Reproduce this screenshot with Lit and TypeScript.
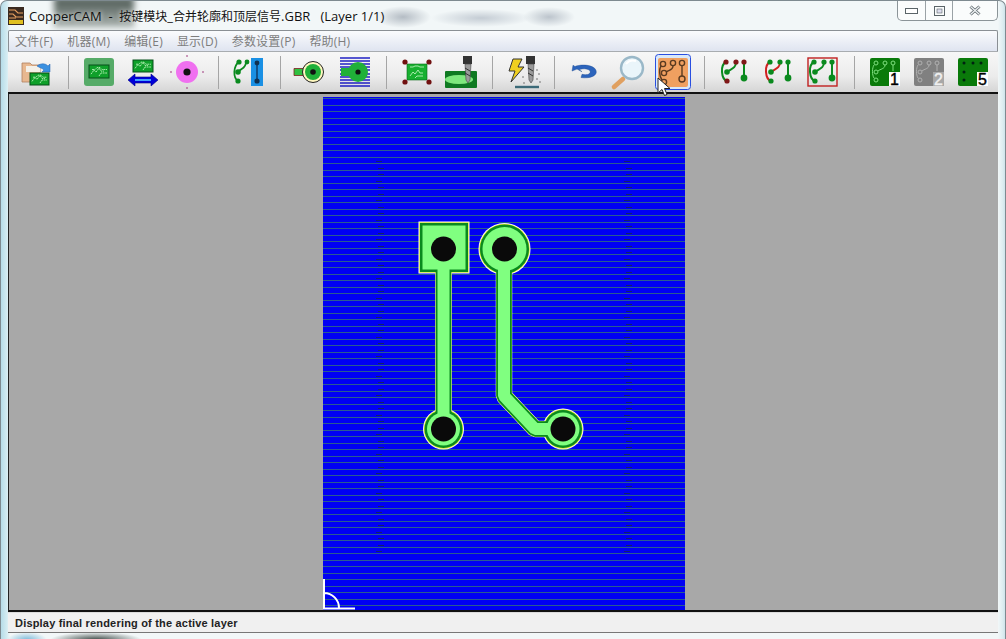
import {LitElement, html, css, svg} from 'lit';
import {customElement} from 'lit/decorators.js';

const G = '#0a8a1e';

// little pcb board used by a few of the toolbar icons
const pcb = (x: number, y: number, w: number, h: number) => svg`
  <rect x=${x} y=${y} width=${w} height=${h} fill="#0fa02a" stroke="#07501a" stroke-width="1"/>
  <path d="M${x + 2} ${y + h * 0.7}l3-4 2 2 3-4 2 3h3M${x + 3} ${y + h * 0.35}h3l2-2h3l2 2h${w - 15}M${x + 10} ${y + h - 2}l2-3h${w - 14}"
    fill="none" stroke="#b8f0b8" stroke-width=".9" stroke-dasharray="2 .6"/>`;

// three-track board motif, colours of the dots and tracks vary per button
const traces = (dot: string, left: string, mid: string) => svg`
  <g fill="none" stroke-width="2">
    <path d="M11 10C5 13 6 27 12 29" stroke=${left}/>
    <path d="M21 10C21 17 15 17 12 20" stroke=${mid}/>
    <path d="M29 10V26" stroke=${G}/>
  </g>
  <circle cx="11" cy="10" r="2.6" fill=${dot}/>
  <circle cx="21" cy="10" r="2.6" fill=${dot}/>
  <circle cx="29" cy="10" r="2.6" fill=${dot}/>
  <circle cx="12" cy="20" r="2.8" fill=${G}/>
  <circle cx="12" cy="29" r="2.6" fill=${dot}/>
  <circle cx="29" cy="26" r="3.4" fill=${G}/>`;

const layer = (bg: string, ring: string, num: string, numBg: string, numFg: string, solid = false) => svg`
  <rect x="5" y="6" width="30" height="28" rx="2" fill=${bg}/>
  ${solid
    ? svg`<g fill="#021"><circle cx="11" cy="11" r="1.5"/><circle cx="20" cy="11" r="1.5"/><circle cx="28" cy="11" r="1.5"/><circle cx="11" cy="20" r="1.5"/><circle cx="11" cy="28" r="1.5"/></g>`
    : svg`<g fill="none" stroke=${ring} stroke-width="1"><circle cx="11" cy="11" r="2"/><circle cx="20" cy="11" r="2"/><circle cx="28" cy="11" r="2"/><circle cx="11" cy="20" r="2"/><circle cx="11" cy="28" r="2"/><path d="M20 13c0 4-5 4-7 6M28 13v6M9 13c-2 3-2 10 0 13"/></g>`}
  <rect x="24" y="20" width="11" height="14" fill=${numBg}/>
  <text x="29.5" y="32.5" text-anchor="middle" font-family="'Liberation Sans',sans-serif" font-size="16" stroke=${numFg} stroke-width=".4" fill=${numFg}>${num}</text>`;

const drill = (x: number) => svg`
  <rect x=${x} y="4" width="9" height="8" fill="#333"/>
  <path d="M${x + 2} 12h6l-1 16-2 3-2-3z" fill="#9a9a9a" stroke="#444" stroke-width=".6"/>
  <path d="M${x + 2} 16l5 3M${x + 2} 21l5 3" stroke="#333" stroke-width="1"/>`;

const blueLines = [6, 9, 12, 15, 18, 22, 25, 28, 31, 34];

// null is a separator
const TOOLS: (ReturnType<typeof svg> | null)[] = [
  svg`<path d="M5 11h8l2 2h8v17H5z" fill="#e8b890" stroke="#b08060" stroke-width=".8"/>
      <path d="M9 14h14v6H9z" fill="#f4f0e8"/>
      <path d="M20 14c4-3 8-3 11 0l2-2v8h-8l2-2c-2-2-4-2-7-4z" fill="#3a90e0" stroke="#2060b0" stroke-width=".5"/>
      ${pcb(13, 21, 19, 12)}`,
  null,
  svg`<rect x="5" y="6" width="30" height="28" rx="3" fill="#56ab68"/>
      ${pcb(10, 13, 20, 13)}`,
  svg`${pcb(10, 8, 20, 12)}
      <path d="M5 28l7-6v3h16v-3l7 6-7 6v-3H12v3z" fill="#0000d8" stroke="#000080" stroke-width=".6"/>
      <path d="M12 27h16v2H12z" fill="#40a0ff"/>`,
  svg`<circle cx="20" cy="20" r="11" fill="#f070f0"/><circle cx="20" cy="20" r="3.6" fill="#111"/>
      <path d="M20 3v2M20 35v2M3 20h2M35 20h2" stroke="#a03a80" stroke-width="1"/>`,
  null,
  svg`<rect x="22" y="6" width="12" height="28" fill="#1a90e4"/>
      <path d="M28 11v18" stroke="#104070" stroke-width="1.6"/>
      <circle cx="28" cy="11" r="2.4" fill="#103050"/><circle cx="28" cy="29" r="2.6" fill="#103050"/>
      <g fill="none" stroke=${G} stroke-width="1.8"><path d="M10 10C4 14 4 26 9 29M17 10c0 6-4 6-8 10"/></g>
      <g fill=${G}><circle cx="10" cy="10" r="2.6"/><circle cx="18" cy="10" r="2.4"/><circle cx="9" cy="20" r="2.8"/><circle cx="9" cy="29" r="2.6"/></g>`,
  null,
  svg`<path d="M3 16.500h14v7H3z" fill="#30c040" stroke="#802020" stroke-width=".8"/>
      <circle cx="22" cy="20" r="10.500" fill="#fff8c0" stroke="#222" stroke-width="1"/>
      <circle cx="22" cy="20" r="8" fill="#20b038"/><circle cx="22" cy="20" r="2.800" fill="#111"/>`,
  svg`<g stroke="#1010c0" stroke-width="1.4">${blueLines.map(y => svg`<path d="M5 ${y}h30"/>`)}</g>
      <path d="M6 16h12v8H6z" fill="#20b038"/>
      <circle cx="23" cy="20" r="10" fill="#20b038"/><circle cx="23" cy="20" r="2.6" fill="#111"/>`,
  null,
  svg`<path d="M10 12H30V28H10z" fill="#18b030" stroke="#0a6a18" stroke-width=".6"/>
      <path d="M13 24l3-4 2 2 3-4 2 3h3M13 15h3l2-1h3l2 1h4M18 26l2-2h6" fill="none" stroke="#b8f0b8" stroke-width=".9"/>
      <g fill="#701010"><circle cx="8" cy="10" r="2.6"/><circle cx="32" cy="10" r="2.6"/><circle cx="8" cy="30" r="2.6"/><circle cx="32" cy="30" r="2.6"/></g>`,
  svg`<rect x="4" y="19" width="32" height="17" rx="1" fill="#0f7a22"/>
      <ellipse cx="18" cy="27.500" rx="14" ry="4.500" fill="#7ee87e"/>
      ${drill(22)}`,
  null,
  svg`<path d="M10 7h9l-4 8h6L8 30l4-11H6z" fill="#f0d020" stroke="#333" stroke-width="1"/>
      ${drill(23)}
      <path d="M12 35h24" stroke="#3c6a78" stroke-width="2.4"/>
      <g fill="#666"><circle cx="20" cy="25" r=".8"/><circle cx="36" cy="22" r=".8"/><circle cx="34" cy="27" r=".8"/><circle cx="37" cy="30" r=".8"/><circle cx="21" cy="31" r=".8"/><circle cx="34" cy="18" r=".8"/></g>`,
  null,
  svg`<path transform="translate(0 8) scale(1 .65)" d="M12 14l-5 3 1-9 2 2c6-4 19-3 21 6 2 8-6 13-15 11l1-5c6 2 9-1 8-5-1-3-6-5-11-2l3 3z" fill="#2c64bc" stroke="#1a4a90" stroke-width=".5"/>`,
  svg`<path d="M14 27L5 35" stroke="#e0a060" stroke-width="4.6" stroke-linecap="round"/>
      <circle cx="23" cy="16" r="11" fill="#eaf5fa" stroke="#9ab8c8" stroke-width="2.4"/>
      <path d="M17 12c3-4 7-4 10-3" stroke="#fff" stroke-width="2" fill="none"/>`,
  svg`<rect x="2.500" y="2.500" width="35" height="35" rx="3" fill="#d8e8fb" stroke="#2a4fe0"/>
      <rect x="5" y="6" width="30" height="29" rx="2" fill="#f0a060"/>
      <g fill="none" stroke="#5a3a20" stroke-width="1.4">
        <circle cx="10" cy="12" r="2.6"/><circle cx="20" cy="11" r="2.6"/><circle cx="29" cy="11" r="2.6"/>
        <circle cx="11" cy="21" r="2.6"/><circle cx="11" cy="30" r="2.6"/><circle cx="29" cy="27" r="3"/>
        <path d="M20 14c0 4-4 4-7 6M29 14v10M8 14c-2 3-2 10 1 14"/>
      </g>`,
  null,
  traces('#801818', G, G),
  traces(G, '#d02020', '#d02020'),
  svg`<rect x="5" y="6" width="29" height="28" fill="none" stroke="#c02020" stroke-width="1.4"/>${traces(G, G, G)}`,
  null,
  layer('#0a7a0a', '#7fe07f', '1', '#fff', '#000'),
  layer('#808080', '#b0b0b0', '2', '#a8a8a8', '#f0f0f0'),
  layer('#0a7a0a', '', '5', '#fff', '#000', true),
];

const MENUS = ['文件(F)', '机器(M)', '编辑(E)', '显示(D)', '参数设置(P)', '帮助(H)'];

@customElement('app-root')
export class AppRoot extends LitElement {
  static styles = css`
    :host {
      display: block;
      width: 1006px;
      height: 639px;
      overflow: hidden;
      position: relative;
      font-family: 'Open Sans', 'Noto Sans CJK SC', sans-serif;
    }

    .window {
      height: 639px;
      box-sizing: border-box;
      display: flex;
      flex-direction: column;
      padding: 0 7px 6px 7px;
      border-radius: 7px 7px 0 0;
      background:
        radial-gradient(ellipse 46px 8px at 95px 639px, #384440 0%, rgba(56, 68, 64, 0) 100%),
        radial-gradient(ellipse 20px 8px at 26px 639px, #7ab8d8 0%, rgba(122, 184, 216, 0) 100%),
        radial-gradient(ellipse 28px 11px at 402px 16px, #b4bcc4 0%, rgba(180, 188, 196, 0) 100%),
        radial-gradient(ellipse 50px 9px at 480px 17px, #c4ccd4 0%, rgba(196, 204, 212, 0) 100%),
        radial-gradient(ellipse 26px 10px at 548px 16px, #bcc4cc 0%, rgba(188, 196, 204, 0) 100%),
        linear-gradient(90deg, #b6dce8 0, #d4ecf2 6px, #f2f7f8 9px, #f2f7f8 997px, #dcecf0 1002px, #cfe3ea 100%);
      border: 1px solid #7e8a90;
      border-bottom: none;
    }

    .title {
      height: 29px;
      flex: none;
      display: flex;
      align-items: center;
      font-size: 13px;
      color: #111;
      white-space: pre;
      position: relative;
      isolation: isolate;
      overflow: hidden;
    }

    /* smudge of whatever sits behind the glass caption */
    .title::before {
      content: '';
      position: absolute;
      z-index: -1;
      left: 46px;
      top: -4px;
      width: 80px;
      height: 30px;
      background: linear-gradient(180deg, #4e5a56 0, #6a7570 35%, #8c9692 70%, #aab2ae 100%);
      filter: blur(3px);
    }

    .title > span {
      text-shadow: 0 0 5px rgba(255, 255, 255, 0.9);
    }

    .title .cjk {
      font-size: 12px;
    }

    .logo {
      width: 16px;
      height: 18px;
      margin-right: 5px;
    }

    .caption-buttons {
      position: absolute;
      top: 0;
      right: 0;
      width: 101px;
      height: 20px;
      display: flex;
      box-sizing: border-box;
      border: 1px solid #8b9498;
      border-top: none;
      border-radius: 0 0 5px 5px;
      background: rgba(255, 255, 255, 0.6);
    }

    .caption-buttons div {
      display: flex;
      align-items: center;
      justify-content: center;
      border-right: 1px solid #9aa2a6;
    }

    .caption-buttons div:last-child {
      border-right: none;
    }

    .btn-min {
      width: 27px;
    }

    .btn-max {
      width: 26px;
    }

    .btn-close {
      flex: 1;
    }

    .menu {
      height: 20px;
      flex: none;
      display: flex;
      align-items: center;
      padding-left: 6px;
      font-size: 12px;
      letter-spacing: 0.2px;
      color: #7d7d7d;
      border: 1px solid #8a8f94;
      border-bottom: none;
      border-radius: 2px 2px 0 0;
      background: linear-gradient(180deg, #fafbfd 0, #dfe4f0 100%);
    }

    .menu span {
      margin-right: 14px;
    }

    .toolbar {
      height: 43px;
      flex: none;
      display: flex;
      align-items: center;
      padding-left: 7px;
      box-sizing: border-box;
      border-top: 1px solid #a8acb0;
      border-bottom: 2px solid #111;
      background: linear-gradient(180deg, #f7f7f7 0, #ececec 60%, #d5d5d5 100%);
    }

    .tool {
      width: 44px;
      height: 40px;
      flex: none;
      display: flex;
      align-items: center;
      justify-content: center;
    }

    .tool svg {
      width: 40px;
      height: 40px;
    }

    .sep {
      width: 18px;
      flex: none;
      height: 33px;
      display: flex;
      justify-content: center;
    }

    .sep::after {
      content: '';
      width: 1px;
      background: #a5a5a5;
    }

    .canvas {
      flex: 1;
      min-height: 0;
      background: #a8a8a8;
      border-left: 1px solid #222;
      border-bottom: 2px solid #111;
      padding: 3px 0 0 314px;
      overflow: hidden;
    }

    .board {
      display: block;
      width: 362px;
      height: 513px;
    }

    .status {
      height: 19px;
      flex: none;
      display: flex;
      align-items: center;
      padding-left: 7px;
      font: 700 11px 'Liberation Sans', sans-serif;
      color: #222;
      letter-spacing: 0.19px;
      background: #f0f0f0;
      border-bottom: 1px solid #777;
      border-top: 1px solid #dcdcdc;
    }

    .cursor {
      position: absolute;
      left: 657px;
      top: 77px;
      width: 14px;
      height: 21px;
    }
  `;

  private renderBoard() {
    const hLines = [];
    // hatching runs across the whole board
    for (let y = 1; y < 513; y += 6.5) hLines.push(Math.round(y) + 0.5);
    const ticks = [];
    for (let y = 64; y < 460; y += 6.5) ticks.push(Math.round(y) + 0.5);
    const track1 = 'M120.5 152V332';
    const track2 = 'M181 152V299L212 332H240';
    const pads = [
      [181.5, 152, 24.5],
      [120.5, 332, 19],
      [240, 332, 19],
    ];
    const layerOf = (stroke: string, w: number, grow: number) => svg`
      <path d=${track1} fill="none" stroke=${stroke} stroke-width=${w}/>
      <path d=${track2} fill="none" stroke=${stroke} stroke-width=${w} stroke-linejoin="bevel"/>
      <rect x=${97 - grow} y=${126 - grow} width=${48 + grow * 2} height=${49 + grow * 2} fill=${stroke}/>
      ${pads.map(([x, y, r]) => svg`<circle cx=${x} cy=${y} r=${r + grow} fill=${stroke}/>`)}`;
    return html`<svg class="board" viewBox="0 0 362 513">
      <rect width="362" height="513" fill="#0000f4"/>
      <g stroke="#2a5c90" stroke-width="1">
        ${hLines.map(y => svg`<path d="M0 ${y}H362"/>`)}
      </g>
      <g stroke="#102070" stroke-width="1">
        ${ticks.map((y, i) => svg`<path d="M${i % 3 ? 55 : 53} ${y}h6M${i % 3 ? 303 : 301} ${y}h6"/>`)}
      </g>
      ${layerOf('#fff', 16.5, 1.5)}
      ${layerOf('#d8e830', 16, 0.7)}
      ${layerOf('#0a8a1e', 15.5, 0)}
      ${layerOf('#80ff80', 12, -2.5)}
      ${[[120.5, 152, 12.5], [181.5, 152, 12.5], [120.5, 332, 12.5], [240, 332, 12.5]].map(
        ([x, y, r]) => svg`<circle cx=${x} cy=${y} r=${r} fill="#0a0a0a"/>`
      )}
      <path d="M1 482V511.5H32M1 496A15 15 0 0 1 16 511" fill="none" stroke="#fff" stroke-width="2"/>
    </svg>`;
  }

  render() {
    return html`
      <div class="window">
        <div class="title">
          <svg class="logo" viewBox="0 0 16 18">
            <rect width="16" height="18" fill="#3a2a20"/>
            <path d="M1 3h6l3 3h5M1 7h4l3 3h7M1 11h7" stroke="#e8a060" stroke-width="1.2" fill="none"/>
            <rect x="1" y="13" width="14" height="4" fill="#e0c020"/>
          </svg>
          <span>CopperCAM  -  <span class="cjk">按键模块</span>_<span class="cjk">合并轮廓和顶层信号</span>.GBR   (Layer 1/1)</span>
          <div class="caption-buttons">
            <div class="btn-min">
              <svg width="13" height="8"><rect x=".5" y="1.500" width="12" height="5" fill="#fff" stroke="#5a6468"/></svg>
            </div>
            <div class="btn-max">
              <svg width="11" height="10"><rect x=".5" y=".5" width="10" height="9" fill="none" stroke="#5a6468"/><rect x="3" y="3" width="5" height="4" fill="#dde" stroke="#5a6468" stroke-width=".6"/></svg>
            </div>
            <div class="btn-close">
              <svg width="12" height="11">
                <path d="M1.500 1.500l9 8M10.500 1.500l-9 8" stroke="#5a6468" stroke-width="3"/>
                <path d="M1.500 1.500l9 8M10.500 1.500l-9 8" stroke="#eef2f4" stroke-width="1.400"/>
              </svg>
            </div>
          </div>
        </div>
        <div class="menu">${MENUS.map(m => html`<span>${m}</span>`)}</div>
        <div class="toolbar">
          ${TOOLS.map(icon =>
            icon === null
              ? html`<div class="sep"></div>`
              : html`<div class="tool"><svg viewBox="0 0 40 40">${icon}</svg></div>`
          )}
        </div>
        <div class="canvas">${this.renderBoard()}</div>
        <div class="status">Display final rendering of the active layer</div>
      </div>
      <svg class="cursor" viewBox="0 0 14 21">
        <path d="M1 1v15l4-3.500 2.500 6 2.500-1-2.500-6H13z" fill="#fff" stroke="#222" stroke-width="1"/>
      </svg>
    `;
  }
}
